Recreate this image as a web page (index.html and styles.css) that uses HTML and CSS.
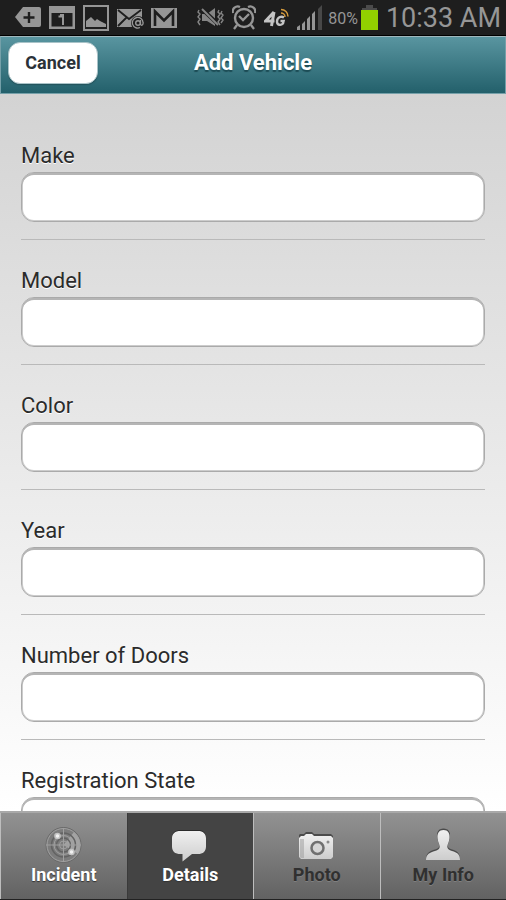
FILE: index.html
```html
<!DOCTYPE html>
<html lang="en">
<head>
<meta charset="utf-8">
<meta name="viewport" content="width=device-width, initial-scale=1">
<title>Add Vehicle</title>
<link rel="stylesheet" href="styles.css">
</head>
<body>
<div class="status">
  <div class="status-group">
    <svg width="27" height="24" viewBox="0 0 27 24"><path d="M8 1h16a2 2 0 0 1 2 2v16a2 2 0 0 1-2 2H8L0 11z" fill="#969696"/><path d="M14 6v11M8.500 11.500h11" stroke="#1e1e1e" stroke-width="2.400"/></svg>
    <svg width="27" height="24" viewBox="0 0 27 24"><path d="M0 0h26v23H0zM2.500 7v13.500h21V7z" fill="#969696" fill-rule="evenodd"/><path d="M9.500 10.500h2.500V9H14v10" fill="none" stroke="#969696" stroke-width="2"/></svg>
    <svg width="27" height="26" viewBox="0 0 27 26"><path d="M1 1h24v24H1z" fill="none" stroke="#969696" stroke-width="2"/><path d="M3 22v-6l5-4 4 4 2-2 3 2 6 3v3z" fill="#969696"/></svg>
    <svg width="27" height="24" viewBox="0 0 27 24"><path d="M0 3h25v18H0z" fill="#969696"/><path d="M1 4l11 9L24 4M1 20l9-9" fill="none" stroke="#1e1e1e" stroke-width="1.800"/><circle cx="21" cy="17" r="7" fill="#1e1e1e"/><circle cx="21" cy="17" r="2.300" fill="none" stroke="#999" stroke-width="1.400"/><path d="M23.500 14v4.500c1 1.500 3 .5 2.500-2a5.300 5.300 0 1 0-3 5" fill="none" stroke="#999" stroke-width="1.300"/></svg>
    <svg width="27" height="24" viewBox="0 0 27 24"><path d="M0 2h26v20H0z" fill="#969696"/><path d="M4 20V5.500l9 9 9-9V20" fill="none" stroke="#1e1e1e" stroke-width="2.600"/></svg>
  </div>
  <div class="status-group status-right">
    <svg width="27" height="24" viewBox="0 0 27 24"><path d="M5 8h5l8-6v18l-8-5H5z" fill="#858585"/><path d="M5 3l17 16" stroke="#1e1e1e" stroke-width="4"/><path d="M5 3l16 16" stroke="#858585" stroke-width="2"/><path d="M2 4l-1 2 2 2-2 3 2 2-2 3 2 3M22 4l-1 2 2 2-2 3 2 2-2 3 2 3M25 5l-1 2 2 2-2 3 2 2-2 3" fill="none" stroke="#858585" stroke-width="1.400"/></svg>
    <svg width="24" height="26" viewBox="0 0 24 26"><circle cx="12" cy="13" r="9" fill="none" stroke="#969696" stroke-width="2.400"/><path d="M7 11l4 4 6-6M5 20l-3 4M19 20l3 4" fill="none" stroke="#969696" stroke-width="2.300"/><path d="M1 8a5 5 0 0 1 7-6M16 2a5 5 0 0 1 7 6" fill="none" stroke="#969696" stroke-width="2.300"/></svg>
    <svg width="25" height="20" viewBox="0 0 25 20"><path d="M10 4L1.500 13h9M10 4L7.500 18" fill="none" stroke="#c4c4c4" stroke-width="3"/><path d="M20 9.500c-3-2-7 0-7 4s4 4 6 2l.6-2.500H16.500" fill="none" stroke="#c4c4c4" stroke-width="2.400"/><path d="M17 5c2 0 4 1.500 4 4M17 1.500c4 0 7 3 7 7" fill="none" stroke="#d49a3c" stroke-width="1.500"/></svg>
    <svg width="26" height="26" viewBox="0 0 26 26"><path d="M0 25v-3l3-2v5zM5 25v-6l3-3v9zM10 25V14l3-3v14zM15 25V9l3-3v19z" fill="#969696"/><path d="M21 25V4l4-4v25z" fill="#484848"/></svg>
    <div class="battery">
      <span>80%</span>
      <svg width="17" height="26" viewBox="0 0 17 26"><path d="M5 0h7v3h4v3H1V3h4z" fill="#4b4b4b"/><path d="M0 5h17v20H0z" fill="#92d000"/></svg>
    </div>
    <time class="clock">10:33 AM</time>
  </div>
</div>
<header class="header">
  <button class="cancel" type="button">Cancel</button>
  <h1 class="title">Add Vehicle</h1>
</header>
<main class="content">
  <form class="form">
    <div class="field"><label for="make">Make</label><input id="make" type="text"></div>
    <div class="field"><label for="model">Model</label><input id="model" type="text"></div>
    <div class="field"><label for="color">Color</label><input id="color" type="text"></div>
    <div class="field"><label for="year">Year</label><input id="year" type="text"></div>
    <div class="field"><label for="doors">Number of Doors</label><input id="doors" type="text"></div>
    <div class="field"><label for="state">Registration State</label><input id="state" type="text"></div>
  </form>
</main>
<nav class="tabs">
  <a class="tab lit" href="#incident">
    <svg width="38" height="38" viewBox="0 0 38 38"><circle cx="18.500" cy="19" r="17.500" fill="#7c7c7c" stroke="#6a6a6a"/><path d="M18.500 19L29 6a17 17 0 0 1 4 22z" fill="#b4b4b4" opacity=".7"/><circle cx="18.500" cy="19" r="12" fill="none" stroke="#636363" stroke-width="1.600"/><circle cx="18.500" cy="19" r="7" fill="none" stroke="#636363" stroke-width="1.400"/><g fill="none" stroke="#a0a0a0"><circle cx="18.500" cy="19" r="16.500"/><circle cx="18.500" cy="19" r="9.500"/><circle cx="18.500" cy="19" r="4"/><path d="M1 19h35M18.500 2v34"/></g><circle cx="12.500" cy="10" r="3.300" fill="#c4c4c4"/><circle cx="12.500" cy="10" r="1.700" fill="#f2f2f2"/><circle cx="26.500" cy="26" r="3.300" fill="#c4c4c4"/><circle cx="26.500" cy="26" r="1.700" fill="#f2f2f2"/></svg>
    <span>Incident</span>
  </a>
  <a class="tab lit current" href="#details" aria-current="page">
    <svg width="38" height="38" viewBox="0 0 38 38"><defs><linearGradient id="pale" x1="0" y1="0" x2="0" y2="1"><stop offset="0" stop-color="#f0f0f0"/><stop offset="1" stop-color="#cdcdcd"/></linearGradient></defs><path d="M10 4h17c5 0 8 2.500 8 7.500v9c0 5-3 7.500-8 7.500H10c-6 0-9-2.500-9-7.500v-9C1 6.500 4 4 10 4z" fill="#2b2b2b"/><path d="M9.500 5H27c5 0 8 2.500 8 7.500v8c0 5-3 7.500-8 7.500h-6l-9.500 7.500V28H9.500C4 28 1 25.500 1 20.500v-8C1 7.500 4 5 9.500 5z" fill="url(#pale)"/></svg>
    <span>Details</span>
  </a>
  <a class="tab" href="#photo">
    <svg width="38" height="38" viewBox="0 0 38 38"><path d="M2 8h4l2-2h6l2 2h17l2 2v4H1v-5z" fill="#4b4b4b"/><path d="M3 10h3l2-2h6l2 2h17l2 2v19l-2 2H3l-2-2V12z" fill="url(#pale)"/><path d="M2 13h4v19H3l-1-1z" fill="#999" opacity=".5"/><circle cx="19.500" cy="22" r="6" fill="#d6d6d6" stroke="#707070" stroke-width="2.500"/><circle cx="30" cy="16" r="1.500" fill="#8a8a8a"/></svg>
    <span>Photo</span>
  </a>
  <a class="tab" href="#info">
    <svg width="38" height="38" viewBox="0 0 38 38"><path d="M19.500 2.500c5 0 7 3.500 6.500 8.500-.3 4-2 6-2.200 8.500-.2 2 1.200 3 4.200 4 5 1.500 8 3.500 8 9.500H2c0-6 4-8 9-9.500 3-1 4.500-2 4.200-4-.2-2.500-1.900-4.500-2.200-8.500-.4-5 1.500-8.500 6.500-8.500z" fill="#4b4b4b"/><path d="M19.500 4c4.500 0 6.500 3.500 6 8-.3 4-2 6-2.200 8.500-.2 2 1.700 3.500 4.700 4.500 5 1.500 8 3 8 9H2c0-6 4-7.500 9-9 3-1 5-2.500 4.700-4.500-.2-2.500-1.900-4.500-2.200-8.500-.4-4.500 1.500-8 6-8z" fill="url(#pale)"/></svg>
    <span>My Info</span>
  </a>
</nav>
</body>
</html>
```
FILE: styles.css
```css
* { box-sizing: border-box; }

body {
  margin: 0;
  height: 100vh;
  display: flex;
  flex-direction: column;
  overflow: hidden;
  font-family: Roboto, "Liberation Sans", sans-serif;
  color: #2b2b2b;
  background: #000;
}

svg { display: block; flex: none; }

.status {
  flex: none;
  height: 36px;
  padding: 1px 5px 0 15px;
  display: flex;
  align-items: center;
  justify-content: space-between;
  color: #969696;
  background: #1e1e1e;
  border-bottom: 1px solid #000;
}
.status-group { display: flex; align-items: center; gap: 7px; }
.status-right { gap: 8px; }
.battery { display: flex; align-items: center; gap: 3px; margin-left: -3px; font-size: 16px; }
.clock { font-size: 27px; line-height: 34px; }

.header {
  flex: none;
  height: 58px;
  padding: 0 7px;
  display: grid;
  grid-template-columns: 1fr auto 1fr;
  align-items: center;
  border: 1px solid #75a0a9;
  border-top-color: #a0b8bd;
  background: linear-gradient(#5995a0, #23606b);
}
.cancel {
  justify-self: start;
  width: 90px;
  height: 42px;
  margin-bottom: 5px;
  padding: 0;
  border: 1px solid #a9c3c8;
  border-radius: 12px;
  background: #fff;
  color: #2b3238;
  font: bold 18px Roboto, "Liberation Sans", sans-serif;
  box-shadow: 0 1px 1px #24545d;
}
.title {
  margin: 0 0 4px;
  font-size: 22px;
  line-height: 28px;
  color: #fff;
  text-shadow: 0 2px 1px #1c4c55;
}

.content {
  flex: 1;
  min-height: 0;
  overflow: hidden;
  padding: 21px 21px 0;
  background: linear-gradient(#d3d3d3, #fff);
}
.field {
  display: flex;
  flex-direction: column;
  gap: 3px;
  padding: 28px 0 17px;
  border-bottom: 1px solid #b9b9b9;
}
.field label {
  font-size: 22px;
  line-height: 26px;
  text-shadow: 0 1px 0 #fff;
}
.field input {
  width: 100%;
  height: 50px;
  padding: 0 12px;
  border: 1px solid #aaa;
  border-radius: 13px;
  background: #fff;
  box-shadow: inset 0 2px 0 #b5b5b5, inset 0 0 0 1px #ccc;
  font: 22px Roboto, "Liberation Sans", sans-serif;
}

.tabs {
  flex: none;
  height: 89px;
  display: grid;
  grid-template-columns: repeat(4, 1fr);
  border-top: 2px solid #a9a9a9;
  border-bottom: 1px solid #222;
}
.tab {
  display: flex;
  flex-direction: column;
  align-items: center;
  padding-top: 13px;
  border-left: 1px solid #bdbdbd;
  background: linear-gradient(#929292, #626262);
  color: #303030;
  font-size: 18px;
  font-weight: bold;
  line-height: 22px;
  text-decoration: none;
  text-shadow: 0 1px 0 #808080;
}
.lit { color: #fff; text-shadow: 0 1px 1px #333; }
.current { background: #444; border-left-color: #3a3a3a; }
```
